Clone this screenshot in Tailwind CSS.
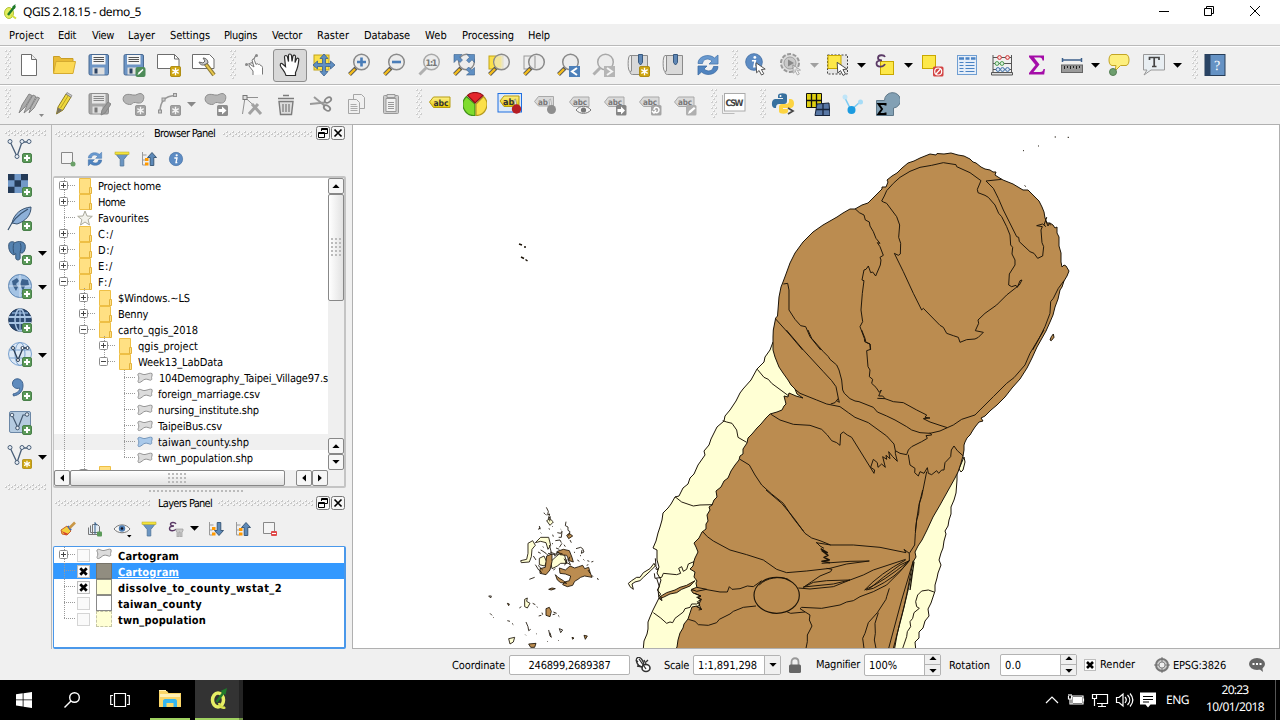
<!DOCTYPE html>
<html lang="en">
<head>
<meta charset="utf-8">
<title>QGIS 2.18.15 - demo_5</title>
<script src="https://cdn.jsdelivr.net/npm/@tailwindcss/browser@4"></script>
</head>
<body class="w-[1280px] h-[720px] overflow-hidden bg-[#f0f0f0] text-[11px] leading-4 text-black font-['DejaVu_Sans_Condensed','DejaVu_Sans',sans-serif] [font-stretch:condensed] [text-rendering:geometricPrecision] whitespace-nowrap">

<svg width="0" height="0" class="absolute">
<defs>
<linearGradient id="gLab" x1="0" y1="0" x2="0" y2="1"><stop offset="0" stop-color="#fdf08a"/><stop offset="1" stop-color="#e8c800"/></linearGradient>
<pattern id="dots" width="4" height="6" patternUnits="userSpaceOnUse"><rect x="0" y="0" width="2" height="2" fill="#cfcfcf"/><rect x="0" y="0" width="1" height="1" fill="#fff"/><rect x="2" y="3" width="2" height="2" fill="#cfcfcf"/><rect x="2" y="3" width="1" height="1" fill="#fff"/></pattern>
<pattern id="hdots" width="6" height="4" patternUnits="userSpaceOnUse"><rect x="0" y="2" width="2" height="2" fill="#c8c8c8"/><rect x="0" y="2" width="1" height="1" fill="#fff"/><rect x="3" y="0" width="2" height="2" fill="#c8c8c8"/><rect x="3" y="0" width="1" height="1" fill="#fff"/></pattern>
<pattern id="grip" width="4" height="4" patternUnits="userSpaceOnUse"><rect width="2" height="2" fill="#bbb"/></pattern>

<symbol id="handle" viewBox="0 0 6 30"><rect width="6" height="30" fill="url(#dots)"/></symbol>
<symbol id="down" viewBox="0 0 9 5"><path d="M0 0h9L4.500 4.800z" fill="currentColor"/></symbol>
<symbol id="plus" viewBox="0 0 10 10"><rect x=".5" y=".5" width="9" height="9" rx="1.500" fill="#5b9a59" stroke="#49804a"/><path d="M5 2v6M2 5h6" stroke="#fff" stroke-width="2"/></symbol>
<symbol id="sparkY" viewBox="0 0 12 12"><rect x=".5" y=".5" width="11" height="11" rx="1.500" fill="#cfa611" stroke="#a8850a"/><path d="M6 2v8M2.500 4l7 4M9.500 4l-7 4" stroke="#fff" stroke-width="1.500"/></symbol>
<symbol id="sparkG" viewBox="0 0 12 12"><rect x=".5" y=".5" width="11" height="11" rx="1.500" fill="#a2a2a2" stroke="#8f8f8f"/><path d="M6 2v8M2.500 4l7 4M9.500 4l-7 4" stroke="#f4f4f4" stroke-width="1.500"/></symbol>
<symbol id="file" viewBox="0 0 24 24"><path d="M4.500 1.500h10l5 5v16h-15z" fill="#fff" stroke="#6d6d6d"/><path d="M14.500 1.500v5h5" fill="#eee" stroke="#6d6d6d"/></symbol>
<symbol id="open" viewBox="0 0 24 24"><path d="M1.500 20V3.500h6l1.500 2h12V9" fill="#e9bb35" stroke="#c99e26"/><path d="M1.500 20.500L4 8.500h19.500l-2.500 12z" fill="#fcd956" stroke="#d5ab30"/></symbol>
<symbol id="save" viewBox="0 0 24 24"><rect x="2" y="1.500" width="19.500" height="20.500" rx="1.500" fill="#6d95c5" stroke="#4a6a92"/><rect x="5" y="2" width="13.500" height="9.500" fill="#f4f4f4"/><path d="M6.500 4.500h10.500M6.500 6.500h10.500M6.500 8.500h10.500" stroke="#555"/><rect x="5.500" y="14.500" width="12" height="7" fill="#dedede"/><rect x="7.500" y="15.500" width="3" height="5" fill="#2b4263"/></symbol>
<symbol id="saveG" viewBox="0 0 24 24"><rect x="2" y="1.500" width="19.500" height="20.500" rx="1.500" fill="#a6a6a6" stroke="#8e8e8e"/><rect x="5" y="2" width="13.500" height="9.500" fill="#e6e6e6"/><path d="M6.500 4.500h10.500M6.500 6.500h10.500M6.500 8.500h10.500" stroke="#888"/><rect x="5.500" y="14.500" width="10" height="7" fill="#dedede"/><rect x="7.500" y="15.500" width="3" height="5" fill="#777"/><path d="M14 23l1-5 6-8 3 2-6 9z" fill="#999" stroke="#858585"/></symbol>
<symbol id="hand" viewBox="0 0 24 24"><path d="M8 22.500c-.5-3-2.500-5-5-8.500-1.500-2.500-.5-4 1-3.500l3.500 3L6.500 4c0-2 2.500-2 3 0l1 4.500V2.500c0-2 2.500-2 3 0l.5 6 1-5.500c.5-1.500 2.500-1.200 2.500.5l-.5 6 1.500-3.500c1-1.500 2.500-.8 2.300.8-.5 5.200-.8 8.200-3.300 12.700v3z" fill="#fff" stroke="#2a2a2a" stroke-width="1.200"/></symbol>
<symbol id="lens" viewBox="0 0 24 24"><path d="M9 15L2.500 21.500" stroke="#555" stroke-width="4"/><path d="M8 16L2.500 21.500" stroke="#f5bd1c" stroke-width="2.400"/><circle cx="14.500" cy="9" r="7.800" fill="#eaeaea" fill-opacity=".82" stroke="#8a8a8a" stroke-width="1.500"/></symbol>
<symbol id="lensG" viewBox="0 0 24 24"><path d="M9 15L2.500 21.500" stroke="#b0b0b0" stroke-width="3"/><circle cx="14.500" cy="9" r="7.800" fill="#ececec" stroke="#a8a8a8" stroke-width="1.500"/></symbol>
<symbol id="book" viewBox="0 0 24 24"><path d="M4 2.500h5v16H4c-2.500 0-2.500-16 0-16z" fill="#eee" stroke="#8b8b8b"/><path d="M5.500 2.500h16v19h-15c-1.500 0-2.500-1-2.500-3l1.500-.5z" fill="#d9d9d9" stroke="#8b8b8b"/><path d="M12.500 1.500h4v8l-2 2.500-2-2.500z" fill="#5f87b5" stroke="#38597f"/></symbol>
<symbol id="refresh" viewBox="0 0 24 24"><path d="M2 10.500C2 3 13 0 18.500 5L22 2v9h-9l3-3C12 4.500 7 6 6.500 10.500z" fill="#6a9ad0" stroke="#4777ad" stroke-width=".8"/><path d="M22 13.500C22 21 11 24 5.500 19L2 22v-9h9l-3 3c4 3.500 9 2 9.500-2.500z" fill="#4f83bf" stroke="#3d6ca3" stroke-width=".8"/></symbol>
<symbol id="info" viewBox="0 0 24 24"><circle cx="12" cy="12" r="10" fill="#5d8cc4" stroke="#4470a5"/><circle cx="13" cy="6.500" r="1.700" fill="#fff"/><path d="M9.500 10.500h4l-1.500 7h2" stroke="#fff" stroke-width="2" fill="none"/></symbol>
<symbol id="cur" viewBox="0 0 12 14"><path d="M1 .8l.6 10 2.500-2.300L6.500 13l2.300-1.200-2.400-4.300 3.800-.4z" fill="#fff" stroke="#444" stroke-width=".9"/></symbol>
<symbol id="lab" viewBox="0 0 24 24"><path d="M1.500 12l4-5h16.500v10.500H5.500z" fill="url(#gLab)" stroke="#b79d10"/><text x="5.500" y="15.500" font-size="8.500" font-weight="bold" fill="#333" textLength="15">abc</text></symbol>
<symbol id="labG" viewBox="0 0 24 24"><path d="M1.500 10l4-5h15.500v9.500H5.500z" fill="#dadada" stroke="#a9a9a9"/><text x="5" y="13" font-size="8" font-weight="bold" fill="#777" textLength="14">abc</text></symbol>
<symbol id="blob" viewBox="0 0 24 24"><path d="M2.500 3.500C7 .5 11 4.500 15 2.500c4-2.500 8 0 6.500 5-1 4-4.500 4-8 3-3-.8-3 2.500-6 2C1.500 12-.5 7 2.500 3.500z" fill="#b5b5b5" stroke="#8d8d8d"/></symbol>
<symbol id="vec" viewBox="0 0 26 26"><path d="M3 3.500l7 15 5-14.500h7" fill="none" stroke="#4a5f78" stroke-width="1.300"/><g fill="#e8eef5" stroke="#4a5f78"><circle cx="3" cy="3.500" r="2"/><circle cx="10" cy="18.500" r="2"/><circle cx="15" cy="3.500" r="2"/><circle cx="22" cy="3.500" r="2"/></g></symbol>
<symbol id="funnel" viewBox="0 0 16 16"><path d="M1 2h14L9.800 8.500V15H6.200V8.500z" fill="#6b95c2" stroke="#4f7599" stroke-width=".8"/><rect x="1" y="1" width="14" height="2.500" fill="#f3e33c" stroke="#b9a820" stroke-width=".5"/></symbol>
<symbol id="treeUp" viewBox="0 0 16 16"><path d="M1.500 1v13h3M1.500 4h4M1.500 9h3" fill="none" stroke="#9a9a9a"/><rect x="4" y="7" width="3.500" height="3" fill="#f90"/><rect x="4" y="11.500" width="3.500" height="3" fill="#f90"/><path d="M11 1.500l4.500 5h-2.700v8H9.200v-8H6.500z" fill="#5d89b8" stroke="#33516f" stroke-width=".9"/></symbol>
<symbol id="treeDn" viewBox="0 0 16 16"><path d="M1.500 1v13h3M1.500 4h4M1.500 9h3" fill="none" stroke="#9a9a9a"/><rect x="4" y="6" width="3.500" height="3" fill="#f90"/><rect x="4" y="11.500" width="3.500" height="3" fill="#f90"/><path d="M11 14.500l4.500-5h-2.700v-8H9.200v8H6.500z" fill="#5d89b8" stroke="#33516f" stroke-width=".9"/></symbol>
<symbol id="fold" viewBox="0 0 14 16"><path d="M.5 .5h11v15H.5z" fill="#ffe083" stroke="#eebf45"/><path d="M10.500 9.500h2v6h-2z" fill="#ffe083" stroke="#e3b23c"/></symbol>
<symbol id="poly" viewBox="0 0 16 12"><path d="M1 2c2-2 4 1 7 .5S13 .5 15 1.500c.8 2-1 3.500-.3 5 .3 1.500-1 2-2.200 1.500-2-.7-4-1.500-6 0S3 11 1.500 10.500C.3 9.500 1.800 8 1.800 6S.5 3.500 1 2z" fill="#dcdcdc" stroke="#8a8a8a" stroke-width=".9"/></symbol>
<symbol id="polyB" viewBox="0 0 16 12"><path d="M1 2c2-2 4 1 7 .5S13 .5 15 1.500c.8 2-1 3.500-.3 5 .3 1.500-1 2-2.200 1.500-2-.7-4-1.500-6 0S3 11 1.500 10.500C.3 9.500 1.800 8 1.800 6S.5 3.500 1 2z" fill="#a9c9ea" stroke="#6c8fb5" stroke-width=".9"/></symbol>
<symbol id="ex" viewBox="0 0 9 9"><rect x=".5" y=".5" width="8" height="8" rx="1" fill="#fff" stroke="#8c8c8c"/><path d="M2 4.500h5M4.500 2v5" stroke="#444"/></symbol>
<symbol id="co" viewBox="0 0 9 9"><rect x=".5" y=".5" width="8" height="8" rx="1" fill="#fff" stroke="#8c8c8c"/><path d="M2 4.500h5" stroke="#444"/></symbol>
<symbol id="float" viewBox="0 0 14 14"><rect x=".5" y=".5" width="13" height="13" rx="2" fill="#f6f6f6" stroke="#777"/><path d="M5.500 5V2.500h6v5H9M5 3.500h7M2.500 6.500h6v5h-6zM2 7.500h7" fill="none" stroke="#000"/></symbol>
<symbol id="close" viewBox="0 0 14 14"><rect x=".5" y=".5" width="13" height="13" rx="2" fill="#f6f6f6" stroke="#777"/><path d="M3.500 3.500l7 7M10.500 3.500l-7 7" stroke="#000" stroke-width="1.700"/></symbol>
<symbol id="xm" viewBox="0 0 12 12"><rect x=".5" y=".5" width="11" height="11" fill="#fff" stroke="#bdbdbd"/><path d="M3 3l6 6M9 3l-6 6" stroke="#000" stroke-width="2.600"/></symbol>
<symbol id="elephant" viewBox="0 0 24 24"><path d="M2 5c0-4 5-4.500 7-2.500C12 .5 21 0 21 7c0 4-2 7-4 7.500l-2-1V20c0 3-5 3-5 0v-5l-2 1.500C3 15 1.500 9 2 5z" fill="#5582b0" stroke="#2e4d6e"/><path d="M8 3c-1.500 3-1 9 0 12M15 3c1.500 3 1 7 0 10" fill="none" stroke="#2e4d6e"/></symbol>
</defs>
</svg>

<!-- Title bar -->
<div class="h-6 bg-white flex items-center font-['Noto_Sans','Open_Sans',sans-serif] [font-stretch:normal] text-[12px]">
  <svg class="w-4 h-4 ml-[3px] mt-[-1px]" viewBox="0 0 16 16"><ellipse cx="6" cy="9" rx="4.500" ry="5.500" fill="#e3ee5c" stroke="#b2c23a"/><path d="M8 11l5 3.500" stroke="#d4df3f" stroke-width="2"/><path d="M5 11L12 2" stroke="#1f7a2b" stroke-width="2.400"/><path d="M12.500 0l-.5 5-3-2z" fill="#1f7a2b"/></svg>
  <span data-w="118" class="ml-1">QGIS 2.18.15 - demo_5</span>
  <svg class="ml-auto mr-[17px] w-[104px] h-3 -mt-0.5" viewBox="1159 0 104 12" fill="none" stroke="#000"><path d="M1159 6.500h10M1204.500 3.500h7v7h-7zM1206.500 3.500v-2h7v7h-2M1250 1l10 10M1260 1l-10 10"/></svg>
</div>

<!-- Menu -->
<nav class="h-[22px] border-b border-[#b9b9b9] flex items-center pl-[9px] pt-0.5">
  <div class="w-[49px]"><span data-w="35">Project</span></div><div class="w-[34px]"><span data-w="18">Edit</span></div><div class="w-9"><span data-w="22">View</span></div><div class="w-[42px]"><span data-w="27">Layer</span></div><div class="w-[54px]"><span data-w="40">Settings</span></div><div class="w-12"><span data-w="33">Plugins</span></div><div class="w-[45px]"><span data-w="30">Vector</span></div><div class="w-[47px]"><span data-w="32">Raster</span></div><div class="w-[61px]"><span data-w="46">Database</span></div><div class="w-[37px]"><span data-w="22">Web</span></div><div class="w-[66px]"><span data-w="52">Processing</span></div><div><span data-w="22">Help</span></div>
</nav>

<!-- Main toolbar -->
<div class="h-[39px] border-b border-[#b9b9b9] shadow-[inset_0_1px_0_#fff] flex items-center *:shrink-0">
  <div class="w-[11px] pl-[5px]"><svg class="w-1.5 h-[30px]"><use href="#handle"/></svg></div>
  <div class="flex [&>svg]:w-6 [&>svg]:h-6 [&>svg]:mx-[5.5px]">
    <svg><use href="#file"/></svg><svg><use href="#open"/></svg><svg><use href="#save"/></svg>
    <svg><use href="#save"/><rect x="13.500" y="14" width="10" height="10" rx="2" fill="#4d8b58"/><path d="M15.500 22l1-2.500 4-3.500 1 1-4 4z" fill="#fff"/></svg>
    <svg viewBox="0 0 24 24"><path d="M.5 1.500h17l4.500 4.500v9.500H.5z" fill="#fff" stroke="#6d6d6d"/><path d="M17.500 1.500v4.500h4.500" fill="none" stroke="#6d6d6d"/><use href="#sparkY" x="13" y="13" width="11" height="11"/></svg>
    <svg viewBox="0 0 24 24"><path d="M.5 1.500h17l4.500 4.500v9.500H.5z" fill="#fff" stroke="#6d6d6d"/><path d="M13 10l9 12" stroke="#8b7a3a" stroke-width="4"/><path d="M14 11.500l8 10.500" stroke="#e9c74b" stroke-width="2"/><path d="M7 9c1 3 4 4 7 2l2-1c0-3-2-5-5-5l2 3-2 2z" fill="#ccc" stroke="#666"/></svg>
  </div>
  <div class="w-[17px] pl-[9px]"><svg class="w-1.5 h-[30px]"><use href="#handle"/></svg></div>
  <div class="flex items-center [&>svg]:w-6 [&>svg]:h-6 [&>svg]:mx-[5.45px]">
    <svg viewBox="0 0 24 24"><path d="M9 11L13 2M13 2l-3 5M3 12l7-3" stroke="#888" fill="none"/><circle cx="13.500" cy="2.500" r="1.500" fill="#888"/><circle cx="3.500" cy="11.500" r="1.500" fill="#888"/><path d="M10 22v-4l-4-5c0-2 1-2 2-1l3 2-2-7c1-1.500 2-1 2.500.5l1.500 4c1-1 2-1 2.500 0 1-.5 2 0 2 1 1 0 2 1 2 2v7" fill="#fff" stroke="#777"/></svg>
    <div class="w-[34px] h-[33px] rounded-[3px] border border-[#8e8e8e] bg-[#d8d8d8] flex items-center justify-center"><svg class="w-6 h-6"><use href="#hand"/></svg></div>
    <svg viewBox="0 0 24 24"><rect x="2" y="2" width="15" height="15" fill="#fbe04a" stroke="#c2a416"/><path d="M12 1l4 4.500h-2.500v5h5V8l4.500 4-4.500 4v-2.500h-5v5H16l-4 4.500-4-4.500h2.500v-5h-5V16L1 12l4.500-4v2.500h5v-5H8z" fill="#5f8fc3" stroke="#3b5f8a" stroke-width=".8"/></svg>
    <svg viewBox="0 0 24 24"><use href="#lens"/><path d="M14.500 4.500v9M10 9h9" stroke="#4a7db8" stroke-width="2.600"/></svg>
    <svg viewBox="0 0 24 24"><use href="#lens"/><path d="M10 9h9" stroke="#4a7db8" stroke-width="2.600"/></svg>
    <svg viewBox="0 0 24 24"><use href="#lensG"/><text x="8.500" y="12.500" font-size="9" font-weight="bold" fill="#777" textLength="12">1:1</text></svg>
    <svg viewBox="0 0 24 24"><use href="#lens"/><g fill="#5f8fc3" stroke="#3b5f8a" stroke-width=".6"><path d="M2 1.500h8L7.500 4l3 3-2.500 2.500-3-3L2 9.500zM22.500 1.500v8L20 6.800l-3 3-2.500-2.500 3-3-2.500-2.800zM22.500 22h-8l2.700-2.500-3-3 2.500-2.500 3 3 2.800-2.500z"/></g></svg>
    <svg viewBox="0 0 24 24"><rect x="2" y="3" width="14" height="13" fill="#fbe04a" stroke="#c2a416"/><use href="#lens"/><path d="M9.500 3.500h5v11h-5a8 8 0 0 1 0-11z" fill="#f3e387" opacity=".7"/></svg>
    <svg viewBox="0 0 24 24"><rect x="2" y="3" width="11" height="13" fill="#eee" stroke="#999"/><use href="#lens"/><path d="M13 3v12" stroke="#999"/></svg>
    <svg viewBox="0 0 24 24"><use href="#lens"/><rect x="13" y="13" width="11" height="11" fill="#4d80ba"/><path d="M21 15l-5 3.500 5 3.500" fill="none" stroke="#fff" stroke-width="2"/></svg>
    <svg viewBox="0 0 24 24"><use href="#lensG"/><rect x="13" y="13" width="11" height="11" fill="#b5b5b5"/><path d="M16 15l5 3.500-5 3.500" fill="none" stroke="#f4f4f4" stroke-width="2"/></svg>
    <svg viewBox="0 0 24 24"><use href="#book"/><use href="#sparkY" x="13" y="13" width="11" height="11"/></svg>
    <svg><use href="#book"/></svg>
    <svg><use href="#refresh"/></svg>
  </div>
  <div class="w-[13.500px] pl-[7px]"><svg class="w-1.5 h-[30px]"><use href="#handle"/></svg></div>
  <div class="flex items-center [&>svg]:w-6 [&>svg]:h-6 [&>svg]:mx-[5.500px] [&>i]:w-3 [&>i]:pl-[1px] [&>i>svg]:w-[9px] [&>i>svg]:h-[5px]">
    <svg viewBox="0 0 24 24"><use href="#info" x="0" y="-1" width="20" height="20"/><use href="#cur" x="11" y="9" width="12" height="14"/></svg>
    <svg viewBox="0 0 24 24"><circle cx="11" cy="10" r="9" fill="#ddd" stroke="#999" stroke-width="2" stroke-dasharray="4 1.600"/><circle cx="11" cy="10" r="6" fill="#c9c9c9" stroke="#a0a0a0"/><path d="M9 6.500l6 3.500-6 3.500z" fill="#888"/><use href="#cur" x="13" y="11" width="10" height="12" opacity=".5"/></svg>
    <i class="text-[#a0a0a0]"><svg><use href="#down"/></svg></i>
    <svg viewBox="0 0 24 24"><rect x="1.500" y="2" width="20" height="19" fill="#e4e4e4" stroke="#444" stroke-dasharray="2 1.500"/><rect x="2" y="2.500" width="13" height="13" fill="#fde849" stroke="#c9a800"/><use href="#cur" x="9.500" y="8.500" width="14" height="15"/></svg>
    <i><svg><use href="#down"/></svg></i>
    <svg viewBox="0 0 24 24"><rect x="7.500" y="8.500" width="13" height="13" fill="#fde849" stroke="#c9a800"/><path d="M12 4c-1-2.500-7-2.500-7 1 0 2 2 2.300 4 2.300C6 7.300 3.500 8 3.500 10.500c0 4 7 4 8.500.5" fill="none" stroke="#5b3a66" stroke-width="1.800"/></svg>
    <i><svg><use href="#down"/></svg></i>
    <svg viewBox="0 0 24 24"><rect x="2.500" y="2.500" width="13" height="13" fill="#fde849" stroke="#c9a800"/><rect x="13" y="13.500" width="10.500" height="10" rx="1.500" fill="#d34343"/><circle cx="18.200" cy="18.500" r="3.500" fill="none" stroke="#fff" stroke-width="1.200"/><path d="M16 21l4.500-5" stroke="#fff" stroke-width="1.200"/></svg>
    <svg viewBox="0 0 24 24"><rect x="2.500" y="2.500" width="19" height="19" fill="#e6eef8" stroke="#6f9ed2"/><path d="M4 5.500h5M10.500 5.500h4M16 5.500h4.500" stroke="#4a83c4" stroke-width="2.500"/><path d="M4.500 9.500h4M10.500 9.500h9M4.500 12.500h4M10.500 12.500h9M4.500 15.500h4M10.500 15.500h9M4.500 18.500h4M10.500 18.500h9" stroke="#4a83c4"/></svg>
    <svg viewBox="0 0 24 24"><path d="M3 2v18M21.500 2v18M3 4.500h18M3 10.500h18M3 16.500h18" stroke="#555" fill="none"/><path d="M1.500 19.500h21v2.500h-21z" fill="#ddd" stroke="#555"/><g fill="#fbe0e0" stroke="#c33"><circle cx="9.500" cy="4.500" r="1.900"/><circle cx="17.500" cy="4.500" r="1.900"/></g><g fill="#dff2df" stroke="#4a9c50"><circle cx="7" cy="10.500" r="1.900"/><circle cx="12" cy="10.500" r="1.900"/></g><g fill="#dfe9f5" stroke="#3e6fa8"><circle cx="8" cy="16.500" r="1.900"/><circle cx="12.500" cy="16.500" r="1.900"/><circle cx="17.500" cy="16.500" r="1.900"/></g></svg>
    <svg viewBox="0 0 24 24"><path d="M4 2.500h15v5h-1.500c-.3-2-1-3-3-3H9l5.500 7L8.500 19H15c2.500 0 3-1 3.500-3H20l-.8 5.500H4V20l6.500-8L4 4z" fill="#a40da8"/></svg>
    <svg viewBox="0 0 24 24"><path d="M2.500 5v4M21.500 5v4M2.500 7h19" stroke="#3c5f8a" stroke-width="1.500"/><rect x="1.500" y="12" width="21" height="7.500" fill="#9a9a9a" stroke="#666"/><path d="M4.500 13v3M7.500 13v2M10.500 13v3M13.500 13v2M16.500 13v3M19.500 13v2" stroke="#222"/></svg>
    <i><svg><use href="#down"/></svg></i>
    <svg viewBox="0 0 24 24"><path d="M5 1.500h14c4 0 4 11 0 11h-5.500L8 18l1-5.500H5c-4 0-4-11 0-11z" fill="#fdef7e" stroke="#c3a524"/><circle cx="6" cy="19" r="3.500" fill="#6d9e6d" stroke="#557f55"/></svg>
    <svg viewBox="0 0 24 24"><path d="M1.500 1.500h21v15.500H9l-7 5 3-5H1.500z" fill="#e8eef2" stroke="#999"/><path d="M7.500 7V4.500h9.500V7M12.200 4.500v9M10 13.500h4.500" stroke="#444" stroke-width="1.700" fill="none"/></svg>
    <i><svg><use href="#down"/></svg></i>
  </div>
  <div class="w-[14px] pl-2"><svg class="w-1.5 h-[30px]"><use href="#handle"/></svg></div>
  <svg class="w-6 h-6 ml-[5.500px]" viewBox="0 0 24 24"><rect x="2" y="1.500" width="20" height="21" fill="#6592c4" stroke="#263c57"/><rect x="2" y="1.500" width="5.500" height="21" fill="#2a4464"/><text x="11" y="17" font-size="14" font-family="Liberation Serif" fill="#fff">?</text></svg>
</div>

<!-- Editing toolbar -->
<div class="h-[39px] shadow-[inset_0_1px_0_#fff] flex items-center pb-px *:shrink-0">
  <div class="w-[11px] pl-[5px]"><svg class="w-1.5 h-[30px]"><use href="#handle"/></svg></div>
  <div class="flex items-center [&>svg]:w-6 [&>svg]:h-6 [&>svg]:mx-[5.500px]">
    <svg class="overflow-visible" viewBox="0 0 24 24"><path d="M2 21l3-8L12 2l3 1.500L8 15z" fill="#aaa" stroke="#868686"/><path d="M7 21l3-8 6-10 3 1.500L13 16z" fill="#b0b0b0" stroke="#868686"/><path d="M12 21l2-6 6-10 2.500 1L17 16z" fill="#b5b5b5" stroke="#868686"/><path d="M22 22h5l-2.500 3z" fill="#888"/></svg>
    <svg viewBox="0 0 24 24"><path d="M4.500 22l1.500-7L14 2l5 3-8 13z" fill="#f0d93c" stroke="#8d7c22"/><path d="M8.500 16L16 4" stroke="#b9a226"/><path d="M14 2l1-1.500 5 3-1 1.800z" fill="#ccc" stroke="#777" stroke-width=".7"/><path d="M4.500 22l1.500-6.500 4.500 2.500z" fill="#7a7466"/></svg>
    <svg><use href="#saveG"/></svg>
    <svg viewBox="0 0 24 24"><use href="#blob"/><use href="#sparkG" x="13" y="13" width="11" height="11"/></svg>
    <svg viewBox="0 0 24 24"><path d="M3 20C3 9 8 4 18 3.500" fill="none" stroke="#999" stroke-width="1.500"/><g fill="#ccc" stroke="#909090"><rect x="1.500" y="18" width="3" height="3"/><rect x="5" y="6" width="3" height="3"/><rect x="16.500" y="1.500" width="3" height="3"/></g><use href="#sparkG" x="13" y="13" width="11" height="11"/></svg>
  </div>
  <div class="w-3 pl-[1px] text-[#888]"><svg class="w-[9px] h-[5px]"><use href="#down"/></svg></div>
  <div class="flex items-center [&>svg]:w-6 [&>svg]:h-6 [&>svg]:mx-[5.500px]">
    <svg viewBox="0 0 24 24"><use href="#blob"/><rect x="13" y="13" width="11" height="11" rx="1.500" fill="#8e8e8e"/><path d="M14.500 17h3.500v-2.500l4.500 4-4.500 4V20h-3.500z" fill="#fff"/></svg>
    <svg viewBox="0 0 24 24"><path d="M3.500 22L6 5.500h13M6 5.500l10 9" stroke="#909090" fill="none"/><rect x="4" y="3.500" width="4" height="4" fill="#ddd" stroke="#777"/><path d="M10 22l9-10M13 12l9 10" stroke="#a2a2a2" stroke-width="3"/></svg>
    <svg viewBox="0 0 24 24"><path d="M4 6.500h16M9 3.500h6M5 9.500h14l-1.500 13h-11z" fill="#ddd" stroke="#7c7c7c" stroke-width="1.400"/><path d="M9 12v8M12 12v8M15 12v8" stroke="#8c8c8c" stroke-width="1.500"/></svg>
    <svg viewBox="0 0 24 24"><path d="M1 12l15-1.500M5 5l11 9" stroke="#999" stroke-width="2"/><ellipse cx="19" cy="8" rx="3.500" ry="2.300" transform="rotate(-35 19 8)" fill="none" stroke="#888" stroke-width="1.800"/><ellipse cx="18" cy="16" rx="3.500" ry="2.300" transform="rotate(35 18 16)" fill="none" stroke="#888" stroke-width="1.800"/></svg>
    <svg viewBox="0 0 24 24"><g fill="#f0f0f0" stroke="#a5a5a5"><path d="M9.500 2.500h8l3 3v11h-11z"/><path d="M4.500 7.500h8l3 3v11h-11z"/></g><path d="M6.500 12.500h6M6.500 14.500h7M6.500 16.500h7M6.500 18.500h7" stroke="#aaa"/></svg>
    <svg viewBox="0 0 24 24"><rect x="4.500" y="3.500" width="15" height="18" rx="1" fill="#ccc" stroke="#999"/><path d="M7 6.500h10v13H7z" fill="#f2f2f2" stroke="#999"/><path d="M8 2.500h8v3H8z" fill="#ddd" stroke="#999"/><path d="M9 10.500h6M9 12.500h6M9 14.500h6M9 16.500h6" stroke="#999"/></svg>
  </div>
  <div class="w-[14px] pl-2"><svg class="w-1.5 h-[30px]"><use href="#handle"/></svg></div>
  <div class="flex items-center [&>svg]:w-6 [&>svg]:h-6 [&>svg]:mx-[5.500px]">
    <svg viewBox="0 2 24 24"><use href="#lab" width="24" height="24"/></svg>
    <svg viewBox="0 0 24 24"><g stroke-width="1.200"><path d="M12 12V23.500A11 11 0 0 1 3.500 4.500z" fill="#7fdc2e" stroke="#3f8f17"/><path d="M13 12V23.500A11 11 0 0 0 20.500 4.500z" fill="#fbe04a" stroke="#b59a1f"/><path d="M12.200 11L4.500 3.500C8-.5 16-.5 20 3.500z" fill="#e3262d" stroke="#8d1015"/></g></svg>
    <svg class="overflow-visible" viewBox="0 0 24 24"><rect x="0" y="1.500" width="23.500" height="18.500" fill="#dce9f8" stroke="#1f6fe0"/><path d="M2 9l4-5h15v10.500H6z" fill="url(#gLab)" stroke="#b79d10"/><text x="5" y="13" font-size="9" font-weight="bold" fill="#333">ab</text><path d="M16 8l1.500-1 2 10h-2z" fill="#eee" stroke="#777" stroke-width=".6"/><circle cx="18.500" cy="17" r="4.700" fill="#b51d24"/></svg>
    <svg viewBox="0 0 24 24"><path d="M1.500 9.500l4-5h15v9.500h-15z" fill="#dadada" stroke="#a9a9a9"/><text x="5" y="12.500" font-size="8" font-weight="bold" fill="#777">ab</text><path d="M16 8l1.500-1 2 10h-2z" fill="#eee" stroke="#999" stroke-width=".6"/><circle cx="18.500" cy="17.500" r="4.500" fill="#8e8e8e"/></svg>
    <svg viewBox="0 0 24 24"><use href="#labG"/><path d="M8 18c4-5 11-5 15 0-4 4.500-11 4.500-15 0z" fill="#f4f4f4" stroke="#777"/><circle cx="15.500" cy="18" r="2.600" fill="#777"/></svg>
    <svg viewBox="0 0 24 24"><use href="#labG"/><rect x="13" y="13" width="10.500" height="10.500" rx="1.500" fill="#858585"/><path d="M14.500 17h3.500v-2.500l4 4-4 4V20h-3.500z" fill="#fff"/></svg>
    <svg viewBox="0 0 24 24"><use href="#labG"/><rect x="13" y="13" width="10.500" height="10.500" rx="1.500" fill="#a5a5a5"/><path d="M16 18c0-4 5-3 5 0s-3 3-4 2M14 19l2 2 2-3" fill="none" stroke="#fff" stroke-width="1.500"/></svg>
    <svg viewBox="0 0 24 24"><use href="#labG"/><rect x="13" y="13" width="10.500" height="10.500" rx="1.500" fill="#b0b0b0"/><path d="M15 22l1-3 5-4 1.500 1.500-5 4.500z" fill="#fff"/></svg>
  </div>
  <div class="w-[14.500px] pl-[9px]"><svg class="w-1.5 h-[30px]"><use href="#handle"/></svg></div>
  <svg class="w-6 h-6 mx-[5.500px]" viewBox="0 2 24 24"><path d="M.5 5v18.500h12" fill="none" stroke="#bbb"/><rect x="2.500" y="3.500" width="20.500" height="17.500" fill="#fff" stroke="#aaa"/><text x="3.500" y="15.500" font-size="9" font-weight="bold" fill="#444" textLength="18">CSW</text></svg>
  <div class="w-[14px] pl-2"><svg class="w-1.5 h-[30px]"><use href="#handle"/></svg></div>
  <div class="flex items-center [&>svg]:w-6 [&>svg]:h-6 [&>svg]:mx-[5.500px]">
    <svg viewBox="0 0 24 24"><path d="M7 6V3.500C7 .5 16 .5 16 3.500V9c0 2-1 3-3 3H8c-2 0-3 1-3 4H3.500C0 16 0 7 4 7h8V6z" fill="#38719f"/><path d="M18 7h2c4 0 4 9 0 9h-8v1h5v2.500c0 3-9 3-9 0V15c0-2 1-3 3-3h4c2 0 3-1 3-3z" fill="#fcd443"/><circle cx="9.500" cy="4" r="1" fill="#fff"/><path d="M17 16l5 3-5 3" fill="none" stroke="#444" stroke-width="1.700"/></svg>
    <svg viewBox="0 0 24 24"><path d="M.5 1.500h15v14H.5z" fill="#dfcf12" stroke="#111"/><path d="M5.500 1.500v14M10.500 1.500v14M.5 8.500h15" stroke="#111" stroke-width="1.300"/><path d="M11 12l12-1 1 12.500H9z" fill="#5877a5" stroke="#16233a"/><path d="M17 11.500v12M10 17.500h14" stroke="#16233a" stroke-width="1.300"/></svg>
    <svg viewBox="0 0 24 24"><path d="M4 6l6 12 9-8" fill="none" stroke="#7ccbf2" stroke-width="1.600"/><circle cx="4" cy="5" r="2.500" fill="#bfe5f8"/><circle cx="19.500" cy="10" r="2.500" fill="#a6dcf7"/><circle cx="10.500" cy="18" r="4" fill="#1b9be0"/></svg>
    <svg viewBox="0 0 24 24"><path d="M.5 8.500h8a8 7.700 0 1 1 9 7.500v7.500H.5z" fill="#82a0b4" stroke="#5e7788"/><path d="M9.500 13.500V12h-7l3.500 5-3.500 5h7v-1.500" fill="none" stroke="#000" stroke-width="2"/></svg>
  </div>
</div>

<!-- Workspace -->
<div class="h-[525px] flex border-t border-[#b5b5b5]">
  <!-- Layer toolbar -->
  <aside class="w-[52px] border-r border-[#b9b9b9] pt-[5px] flex flex-col">
    <svg class="w-[42px] h-1.5 ml-[5px]"><rect width="42" height="6" fill="url(#hdots)"/></svg>
    <div class="-mt-0.5 [&>div]:h-[34px] [&>div]:flex [&>div]:items-center [&>div]:pl-[7px] [&>div]:gap-[5px] [&_.ic]:w-[26px] [&_.ic]:h-[26px] [&_.ar]:w-[9px] [&_.ar]:h-[5px]">
      <div><svg class="ic" viewBox="0 0 26 26"><use href="#vec"/><use href="#plus" x="15" y="15" width="10" height="10"/></svg></div>
      <div><svg class="ic" viewBox="0 0 26 26"><rect x="1" y="2" width="20" height="19" fill="#7299c8"/><path d="M1 2h6.500v6.300H1zM14 2h7v6.300h-7zM7.500 8.300H14v6.400H7.500zM1 14.700h6.500V21H1z" fill="#243a57"/><use href="#plus" x="15" y="15" width="10" height="10"/></svg></div>
      <div><svg class="ic" viewBox="0 0 26 26"><path d="M5 17C7 8 14 2 24 1c0 8-5 14-14 17z" fill="#8db0d8" stroke="#38526f"/><path d="M1 24C5 15 12 8 21 3" fill="none" stroke="#38526f" stroke-width="1.200"/><use href="#plus" x="15" y="15" width="10" height="10"/></svg></div>
      <div><svg class="ic" viewBox="0 0 26 26"><use href="#elephant" x="0" y="0" width="21" height="22"/><use href="#plus" x="15" y="15" width="10" height="10"/></svg><svg class="ar"><use href="#down"/></svg></div>
      <div><svg class="ic" viewBox="0 0 26 26"><circle cx="13" cy="12" r="11.500" fill="#a4c3e4" stroke="#5b83b0"/><path d="M5 7l5-3 2 3-3 3 2 3-2 4-3-5zM15 5l6 1 1 5-4 1-2 5-3-7zM14 19l4-1-1 3z" fill="#3d628d"/><path d="M1.500 12h23M13 .5v23" stroke="#dfe9f4" stroke-width=".8"/><use href="#plus" x="15" y="15" width="10" height="10"/></svg><svg class="ar"><use href="#down"/></svg></div>
      <div><svg class="ic" viewBox="0 0 26 26"><circle cx="13" cy="12" r="11.300" fill="#2c4a72" stroke="#223a5a"/><path d="M2 9h22M2 15h22" stroke="#a9c5e4" stroke-width="2"/><path d="M5 5h16" stroke="#7fa3cc" stroke-width="1.500"/><ellipse cx="13" cy="12" rx="5" ry="11" fill="none" stroke="#a9c5e4" stroke-width="1.500"/><path d="M13 1v22" stroke="#a9c5e4" stroke-width="1.200"/><use href="#plus" x="15" y="15" width="10" height="10"/></svg></div>
      <div><svg class="ic" viewBox="0 0 26 26"><circle cx="13" cy="12" r="11.500" fill="#dce8f5" stroke="#7ba2cf"/><ellipse cx="13" cy="12" rx="5" ry="11.500" fill="none" stroke="#7ba2cf"/><path d="M2 8h22M2 16h22" stroke="#7ba2cf"/><path d="M6 6l5 12 5-12h5" fill="none" stroke="#2c3e55" stroke-width="1.300"/><g fill="#fff" stroke="#2c3e55"><circle cx="6" cy="6" r="1.500"/><circle cx="11" cy="18" r="1.500"/><circle cx="15.500" cy="6" r="1.500"/><circle cx="20.500" cy="6" r="1.500"/></g><use href="#plus" x="15" y="15" width="10" height="10"/></svg><svg class="ar"><use href="#down"/></svg></div>
      <div><svg class="ic" viewBox="0 0 26 26"><path d="M6 18c5-1 7-4 6.500-6C9 13.500 5 11 5.500 7c.5-6 11-6 10.500 3-.3 6-4 9-9.500 10z" fill="#5f8bbd" stroke="#40648f"/><use href="#plus" x="15" y="15" width="10" height="10"/></svg></div>
      <div><svg class="ic" viewBox="0 0 26 26"><rect x="2.500" y="1.500" width="21" height="21" rx="1.500" fill="#b5cbe0" stroke="#6b87a6"/><path d="M5 5l6 13L16 5h5" fill="none" stroke="#44586f" stroke-width="1.200"/><g fill="#e8eef5" stroke="#44586f"><circle cx="5" cy="5" r="1.800"/><circle cx="10.500" cy="18" r="1.800"/><circle cx="20" cy="4.500" r="1.800"/></g><use href="#plus" x="15" y="15" width="10" height="10"/></svg></div>
      <div><svg class="ic" viewBox="0 0 26 26"><use href="#vec"/><use href="#sparkY" x="15" y="15" width="10" height="10"/></svg><svg class="ar"><use href="#down"/></svg></div>
    </div>
    <svg class="w-[42px] h-1.5 ml-[5px] mt-2.5"><rect width="42" height="6" fill="url(#hdots)"/></svg>
  </aside>

  <!-- Panels -->
  <section class="w-[294px] flex flex-col *:shrink-0 [&_span]:pt-0.5">
    <div class="h-[18px] flex items-center pl-[3px]">
      <svg class="w-[90px] h-1.5"><rect width="90" height="6" fill="url(#hdots)"/></svg>
      <span data-w="61" class="ml-[9px] -mt-0.5">Browser Panel</span>
      <svg class="w-[90px] h-1.5 ml-[8px]"><rect width="90" height="6" fill="url(#hdots)"/></svg>
      <svg class="w-3.5 h-3.5 ml-[3px] -mt-0.5"><use href="#float"/></svg><svg class="w-3.5 h-3.5 ml-[1px] -mt-0.5"><use href="#close"/></svg>
    </div>
    <div class="h-[33px] flex items-center pl-[8px] pb-0.5 gap-[11px] *:w-4 *:h-4">
      <svg viewBox="0 0 16 16"><path d="M1.500 1.500h11v11h-11z" fill="#f4f4f4" stroke="#888"/><circle cx="13" cy="13" r="2.500" fill="#6aa068"/></svg>
      <svg><use href="#refresh"/></svg><svg><use href="#funnel"/></svg><svg><use href="#treeUp"/></svg><svg><use href="#info"/></svg>
    </div>
    <div class="ml-px h-[312px] w-[293px] border-2 border-l border-[#c4c4c4] rounded-[2px] bg-white flex flex-col">
      <div class="flex h-[292px]">
        <div class="relative w-[274px] h-[292px] overflow-hidden [&>div]:h-4 [&>div]:flex [&>div]:items-center [&>div>*]:shrink-0 [&_.f]:w-3.5 [&_.f]:h-4 [&_.f]:mr-[5px] [&_.p]:w-4 [&_.p]:h-3 [&_.p]:mr-[5px] [&_.p]:-mt-px [&_.e]:w-[9px] [&_.e]:h-[9px] [&_.e]:mr-[11px] [&_.e]:z-10 [&_.e]:-mt-0.5">
          <svg class="absolute left-0 top-0 w-[274px] h-[292px]" viewBox="54 178 274 292" fill="none" stroke="#999" stroke-dasharray="1 1" shape-rendering="crispEdges"><path d="M64.500 178V470M84.500 288V470M104.500 336V362M124.500 370V457M64 185.500h11M64 201.500h11M64 217.500h11M64 233.500h11M64 249.500h11M64 265.500h11M64 281.500h11M84 297.500h11M84 313.500h11M84 329.500h11M104 345.500h11M104 361.500h11M124 377.500h11M124 393.500h11M124 409.500h11M124 425.500h11M124 441.500h11M124 457.500h11"/></svg>
          <div class="pl-[5px]"><svg class="e"><use href="#ex"/></svg><svg class="f"><use href="#fold"/></svg><span data-w="63">Project home</span></div>
          <div class="pl-[5px]"><svg class="e"><use href="#ex"/></svg><svg class="f"><use href="#fold"/></svg><span data-w="27">Home</span></div>
          <div class="pl-[23px]"><svg class="w-4 h-4 mr-[5px] z-10 -mt-px" viewBox="0 0 16 16"><path d="M8 1l2 5 5.300.3-4.200 3.400L12.500 15 8 12l-4.500 3 1.400-5.300L.7 6.300 6 6z" fill="#f2f2ec" stroke="#aaa99c"/></svg><span data-w="51">Favourites</span></div>
          <div class="pl-[5px]"><svg class="e"><use href="#ex"/></svg><svg class="f"><use href="#fold"/></svg><span data-w="16">C:/</span></div>
          <div class="pl-[5px]"><svg class="e"><use href="#ex"/></svg><svg class="f"><use href="#fold"/></svg><span data-w="16">D:/</span></div>
          <div class="pl-[5px]"><svg class="e"><use href="#ex"/></svg><svg class="f"><use href="#fold"/></svg><span data-w="15">E:/</span></div>
          <div class="pl-[5px]"><svg class="e"><use href="#co"/></svg><svg class="f"><use href="#fold"/></svg><span data-w="15">F:/</span></div>
          <div class="pl-[25px]"><svg class="e"><use href="#ex"/></svg><svg class="f"><use href="#fold"/></svg><span data-w="72">$Windows.~LS</span></div>
          <div class="pl-[25px]"><svg class="e"><use href="#ex"/></svg><svg class="f"><use href="#fold"/></svg><span data-w="30">Benny</span></div>
          <div class="pl-[25px]"><svg class="e"><use href="#co"/></svg><svg class="f"><use href="#fold"/></svg><span data-w="80">carto_qgis_2018</span></div>
          <div class="pl-[45px]"><svg class="e"><use href="#ex"/></svg><svg class="f"><use href="#fold"/></svg><span data-w="60">qgis_project</span></div>
          <div class="pl-[45px]"><svg class="e"><use href="#co"/></svg><svg class="f"><use href="#fold"/></svg><span data-w="85">Week13_LabData</span></div>
          <div class="pl-[83px]"><svg class="p"><use href="#poly"/></svg><span data-w="181" class="ml-px">104Demography_Taipei_Village97.shp</span></div>
          <div class="pl-[83px]"><svg class="p"><use href="#poly"/></svg><span data-w="102">foreign_marriage.csv</span></div>
          <div class="pl-[83px]"><svg class="p"><use href="#poly"/></svg><span data-w="101">nursing_institute.shp</span></div>
          <div class="pl-[83px]"><svg class="p"><use href="#poly"/></svg><span data-w="64">TaipeiBus.csv</span></div>
          <div class="pl-[83px] bg-[#f0f0f0]"><svg class="p"><use href="#polyB"/></svg><span data-w="91">taiwan_county.shp</span></div>
          <div class="pl-[83px]"><svg class="p"><use href="#poly"/></svg><span data-w="95">twn_population.shp</span></div>
          <div class="pl-[25px]"><svg class="e"><use href="#ex"/></svg><svg class="f"><use href="#fold"/></svg></div>
        </div>
        <div class="w-4 bg-[#efefef] flex flex-col">
          <div class="h-4 border border-[#888] rounded-[2px] bg-[#f6f6f6] flex items-center justify-center"><svg class="w-2 h-1 rotate-180"><use href="#down"/></svg></div>
          <div class="h-[107px] border border-[#888] rounded-[2px] bg-linear-to-r from-white to-[#e2e2e2] flex items-center justify-center"><svg class="w-2.5 h-[19px]"><rect width="10" height="19" fill="url(#grip)"/></svg></div>
          <div class="mt-auto h-4 border border-[#888] rounded-[2px] bg-[#f6f6f6] flex items-center justify-center"><svg class="w-2 h-1 rotate-180"><use href="#down"/></svg></div>
          <div class="h-4 border border-[#888] rounded-[2px] bg-[#f6f6f6] flex items-center justify-center"><svg class="w-2 h-1"><use href="#down"/></svg></div>
        </div>
      </div>
      <div class="h-4 flex bg-[#f0f0f0]">
        <div class="w-4 h-4 border border-[#888] rounded-[2px] bg-[#f6f6f6] flex items-center justify-center"><svg class="w-2 h-1 rotate-90"><use href="#down"/></svg></div>
        <div class="w-[215px] h-4 border border-[#888] rounded-[2px] bg-linear-to-b from-white to-[#e2e2e2] flex items-center justify-center"><svg class="w-[19px] h-2.5"><rect width="19" height="10" fill="url(#grip)"/></svg></div>
        <div class="w-4 h-4 ml-[11px] border border-[#888] rounded-[2px] bg-[#f6f6f6] flex items-center justify-center"><svg class="w-2 h-1 rotate-90"><use href="#down"/></svg></div>
        <div class="w-4 h-4 border border-[#888] rounded-[2px] bg-[#f6f6f6] flex items-center justify-center"><svg class="w-2 h-1 -rotate-90"><use href="#down"/></svg></div>
      </div>
    </div>
    <svg class="w-[94px] h-1 ml-[97px] mt-[2px]"><rect width="94" height="2" fill="url(#grip)"/></svg>
    <div class="h-[18px] flex items-center pl-[3px]">
      <svg class="w-[95px] h-1.5"><rect width="95" height="6" fill="url(#hdots)"/></svg>
      <span data-w="54" class="ml-[8px]">Layers Panel</span>
      <svg class="w-[95px] h-1.5 ml-[6px]"><rect width="95" height="6" fill="url(#hdots)"/></svg>
      <svg class="w-3.5 h-3.5 ml-[3px]"><use href="#float"/></svg><svg class="w-3.5 h-3.5 ml-[1px]"><use href="#close"/></svg>
    </div>
    <div class="h-[33px] flex items-center pl-[8px] gap-[11px] [&>svg]:w-4 [&>svg]:h-4">
      <svg viewBox="0 0 16 16"><path d="M1 9l6-4 4 5-4 4-5-1z" fill="#f3cf3c" stroke="#c9622a"/><path d="M1.500 10l4 4 3-1z" fill="#d63b2f"/><path d="M8 5l3 4" stroke="#3b67b5" stroke-width="2"/><path d="M9.500 7L15 1.500" stroke="#c99746" stroke-width="2.600"/></svg>
      <svg viewBox="0 0 16 16"><path d="M1.500 6.500v7h8M3.500 4.500v7h8M5.500 3.500h5l2 2v8h-7z" fill="#e4edf5" stroke="#777"/><path d="M8 13V1.500l2 3" stroke="#33608f" fill="none"/><rect x="10" y="10.500" width="5" height="5" rx="1" fill="#5b9a59"/></svg>
      <svg class="overflow-visible" viewBox="0 0 16 16"><path d="M0 8c4-5.500 12-5.500 16 0-4 5-12 5-16 0z" fill="#f6f6f6" stroke="#777"/><circle cx="8" cy="7.500" r="3.200" fill="#4e7fb4"/><circle cx="8" cy="7.500" r="1.300" fill="#112"/><path d="M13 14h4.500l-2.200 2.500z" fill="#000"/></svg>
      <svg><use href="#funnel"/></svg>
      <svg viewBox="0 0 16 16"><path d="M8 3C7 1 2.500 1 2.500 3.300 2.500 5 4 5 6 5 4 5 1.500 5.300 1.500 7.500c0 3 5 3 6.500.5" fill="none" stroke="#5b3a66" stroke-width="1.400"/><path d="M8 8h7v2l-1 1v5h-2v-5h-1v5H9v-5l-1-1z" fill="#c9c9c9" stroke="#9a9a9a" stroke-width=".7"/></svg>
      <svg class="!w-[9px] !h-[5px] -ml-[5px] -mr-[2px]"><use href="#down"/></svg>
      <svg><use href="#treeDn"/></svg><svg><use href="#treeUp"/></svg>
      <svg viewBox="0 0 16 16"><path d="M1.500 1.500h11v11h-11z" fill="#f4f4f4" stroke="#888"/><rect x="9" y="10" width="6" height="5" rx="1" fill="#df4b4b"/><path d="M10 12.500h4" stroke="#fff"/></svg>
    </div>
    <div class="relative ml-px mt-px h-[103px] border-x-2 border-l border-b-2 border-t border-[#4a98ea] rounded-[2px] bg-white font-bold [&>div]:h-4 [&>div]:flex [&>div]:items-center [&_span]:pt-[3px] [&_.c]:w-[13px] [&_.c]:h-[13px] [&_.c]:mr-1.5 [&_.c]:border [&_.c]:border-[#d5d5d5] [&_.c]:bg-[#fafafa] [&_.x]:w-[13px] [&_.x]:h-[13px] [&_.x]:mr-1.5 [&_.s]:w-4 [&_.s]:h-4 [&_.s]:mr-1.5 [&_.s]:border">
      <svg class="absolute left-0 top-0 w-[24px] h-[80px] z-10" viewBox="54 547 24 80" fill="none" stroke="#999" stroke-dasharray="1 1" shape-rendering="crispEdges"><path d="M64.500 547V619M64 554.500h11M64 570.500h11M64 586.500h11M64 602.500h11M64 618.500h11"/></svg>
      <div class="pl-[5px]"><svg class="w-[9px] h-[9px] mr-[9px] z-20 -mt-0.5"><use href="#ex"/></svg><i class="c"></i><svg class="w-4 h-3 mr-1.5 -mt-0.5"><use href="#poly"/></svg><span data-w="61">Cartogram</span></div>
      <div class="pl-[23px] bg-[#3399ff] text-white"><svg class="x"><use href="#xm"/></svg><i class="s bg-[#918d80] border-[#77746a]"></i><span data-w="61" class="underline">Cartogram</span></div>
      <div class="pl-[23px]"><svg class="x"><use href="#xm"/></svg><i class="s bg-[#ffffd4] border-[#8f8f80]"></i><span data-w="164">dissolve_to_county_wstat_2</span></div>
      <div class="pl-[23px]"><i class="c"></i><i class="s bg-white border-[#888]"></i><span data-w="84">taiwan_county</span></div>
      <div class="pl-[23px]"><i class="c"></i><i class="s bg-[#ffffd4] border-dashed border-[#c5c5a5]"></i><span data-w="88">twn_population</span></div>
    </div>
  </section>

  <!-- Map canvas -->
  <div class="ml-[6px] -mt-px w-[928px] h-[525px] border border-[#b0b0b0] bg-white">
    <svg class="block w-[926px] h-[523px]" viewBox="353 125 926 523" stroke="#1c1408" stroke-width="1" stroke-linejoin="round" fill="none">
      <g fill="#ffffd4">
        <path d="M773 342L770 350 765 357 764 362 757 369 751 380 743 389 740 393 736 401 730 410 725 416 724 421 717 427 711 439 709 445 704 451 705 455 698 465 694 474 690 478 688 484 683 488 679 496 675 497 671 504 668 508 663 513 662 520 660 527 658 533 656 541 653 548 657 550 657 560 659 567 657 573 661 580 658 590 659 598 656 604 653 610 650 617 648 622 648 629 647 634 644 641 643 652H700L720 600 730 500 775 440 815 405 785 350z"/>
        <path d="M964 457L965 462 963 470 961 472 959 469zM957 472V480L956 493 954 500 951 507 951 514 949 520 948 526 945 531 946 534 944 541 943 548 941 553 939 560 941 565 938 573 937 578 935 585 935 591 931 603 928 609 929 616 925 621 923 628 919 632 919 638 915 642 916 652H890L905 590 920 530z"/>
      </g>
      <path fill="#bb8c50" d="M773 337L773.300 330 775.700 318 777.500 316 779 297 781 287 783 282 786 274 790 263 795 253 803 242 808 237 813 232 823 225 830 221 837 217 843 213 850 209 855 209 862 205 868 203 873 198 878 193 882 189 882 187 886 187 888 182 887 180 892 176 897 173 902 168 908 163 914 161 920 158 925 156 930 154 936 155 937 153.500 944 154 951 153 958 155 964 156 970 159 973 162 976 163 981 167 985 169 990 170 993 172 996 172 995 175 998 177 1003 180 1013 184 1018 187 1023 190 1028 190 1032 194 1035 197 1039 201 1042 207 1044 212 1045 218 1047 223 1050 223 1053 225 1055 228 1057 227 1057 233 1059 237 1059 246 1061 253 1061 262 1062 267 1064 265 1066 266 1069 271 1067 276 1064 281 1062 287 1060 290 1058 299 1055 307 1053 315 1050 322 1046 331 1037 347 1032 358 1027 368 1020 379 1012 388 1005 397 997 405 991 410 985 416 981 418 983 421 979 422 975 427 973 430 970 435 967 438 965 442 964 445 964 450 963 456 961 463 958 472 955 478 950 487 945 496 940 505 933 517 927 530 922 540 918 546 915 552 916 557 913 562 910 577 907 593 904 607 900 622 897 635 894 652H674L677 647 678 640 680 633 683 628 684 624 688 619 690 613 692 607 697 606 701 609 699 604 701 600 698 598 701 596 693 593 691 590 697 588 696 583 697 581 694 577 695 572 690 569 693 566 694 561 695 558 698 552 696 547 694 543 699 538 702 532 706 529 706 524 708 521 707 515 710 510 709 507 712 505 714 500 717 497 716 491 721 487 724 481 728 478 731 471 735 465 739 460 740 456 743 454 743 449 747 443 748 438 752 434 757 428 761 424 766 418 770 414 777 412 782 410 784 406 786 404 785 400 784 396 788 397 789 393 796 396 803 398 797 394 795 389 791 385 788 380 783 373 779 367 775 357 773 350z"/>

      <!-- county borders, northern half -->
      <g transform="translate(740 130) scale(.33333)" stroke-width="2.900">
        <path d="M425 213L433 198 440 182 460 160 480 142 510 124 540 112 575 106 610 98 648 104 650 110 690 128 723 152 712 178 714 188 735 196 745 202 765 225 776 250 785 260 800 290 810 315 812 345 818 352 816 372 825 390 825 405 808 432 806 465 815 470 828 466 832 472 840 452 846 450 838 465 800 495 770 525 735 550 714 570 716 580 706 602 730 607 715 622 705 627 680 629 660 637 655 622 640 617 620 610 610 592 600 586 550 535 545 540 520 490 490 425 463 370 475 376 481 372 482 340 476 322 479 285 470 260 440 220 430 216z"/>
        <path d="M345 236L358 248 372 255 376 270 388 276 390 288 400 305 408 325 420 340 412 338 420 350 430 376 420 382 423 390 421 405 407 438 398 426 392 428 385 408 378 418 372 420 366 450 372 452 367 490 363 540 368 575 360 590 373 625 374 635 390 642 391 660"/>
        <path d="M785 148L738 153 760 175 775 205 790 240 830 320 836 322 838 335 870 365 882 370 893 385 908 378 911 350 906 338 903 300 907 290 890 287 908 282 918 290M912 285L920 262 916 270 924 288 928 280 932 286M130 462L143 460 147 480 147 540 165 568 182 587 197 590 210 620 242 660M107 567L150 615 188 660M972 452L955 475 940 505 932 515 930 550 915 590 895 630 878 660M944 21h4M983 22h4M894 48h3M849 62h3M854 166l3 4"/>
        <path d="M930 630L934 620 940 612 942 622 934 632z" fill="#bb8c50"/>
      </g>
      <g transform="translate(740 330) scale(.33333)" stroke-width="2.900">
        <path d="M204 0L215 25 250 65 265 80 270 88 290 105 297 120 305 150 308 180 313 190 330 206 345 213 357 215 400 232 412 246 440 258 465 270 500 290 515 300 540 308 570 310 600 303 622 293 640 285 665 268 705 255 760 200 800 160 822 143 855 105 870 70 912 0"/>
        <path d="M139 0L190 60 250 125 275 152 288 170 295 205 285 218 272 222M295 205L298 217 290 212M165 178L180 190 230 210 260 222 300 230 325 248 345 262 385 278 440 318 462 342 466 362 480 370 500 374 505 360 515 350 545 335 562 325 558 317 575 315 570 308"/>
        <path d="M365 0L375 25 378 37 390 42 392 58 380 62 384 110 390 120 388 140 398 148 395 160 408 172 418 187 424 180 416 198 428 198 435 206 412 205M435 206L460 215 490 218 530 240 560 255 555 262 570 264 550 266 570 276 600 286 622 293"/>
        <path d="M93 253L120 270 160 283 210 286 245 298 262 315 275 332 290 338 300 346 302 312 310 306 322 315 335 322 402 430 404 420 392 412 400 388 412 398 414 412 425 402 436 412 428 380 440 388 438 376 450 386 446 365 458 380 472 394 466 370 466 362M505 374L510 405 525 415 524 428 535 438 540 425 552 430 562 413 565 430 575 434 590 422 596 430 605 420 612 420 615 398 632 380 634 360 642 348 652 362 670 378"/>
        <path d="M560 425L545 500 538 520 536 550 530 570 526 603M0 388L28 405 45 435 65 465 95 492 130 520 160 565 190 603M52 118L72 142 85 148 95 160 145 197M-52 272L-40 276 -24 280 -10 300 -6 322 20 337"/>
      </g>
      <!-- county borders, southern half -->
      <g transform="translate(620 490) scale(.33333)" stroke-width="2.900">
        <path d="M438 0L485 40 520 82 555 130 575 144 600 152 632 165 700 165 780 172 858 188 852 178 868 190 884 165 886 130 890 90 896 50 908 0M868 190L868 212"/>
        <path d="M248 125L262 140 280 153 330 180 380 194 430 210 470 238 500 248 560 243 630 235 680 222 748 213 690 214 605 220M588 158L632 165M590 158L600 168 612 175"/>
        <path d="M602 176L622 188 606 182 624 196 612 202 628 210 606 214 630 218" stroke-width="4.500"/>
        <path d="M620 235L636 238 632 245 600 258 575 275 550 292 580 277 620 272 690 270 640 282 550 291M535 294L570 297 640 290 690 270 730 255 760 240 857 208M857 210Q780 250 734 300Q790 275 868 212Q830 262 760 295L738 300M868 212L840 225 790 262 748 296"/>
        <path d="M868 212L840 245 800 285 760 305 720 320 700 332 680 336 660 345 605 355 545 352 540 356 570 375 568 390 576 408 570 420 562 435 562 455 558 475M808 295L800 320 798 328 772 368 745 398 735 430 728 445 732 475M775 368L765 400 766 430 763 450 768 475M880 212L845 330 806 475M878 240L862 310 845 380 820 475"/>
        <path d="M882 215L870 300" stroke-width="4"/>
        <path d="M165 20L185 36 220 48 240 45 278 44M215 300L255 298 300 306 322 306 328 290 336 298 360 296 382 288 400 290 425 272M205 388L225 394 235 404 265 406 290 398 298 388 330 372 340 364 370 352 408 348M498 364L512 370 555 366M100 368L122 384 140 400 150 396 158 398 165 385 190 366 195 356 210 352 215 342 230 342 240 335M225 310L242 318 230 322 245 328 232 335 240 345 230 350 246 358 236 360M103 250L105 265 125 262 130 250 170 254 182 250 176 235 185 230 190 244 200 238 205 222 222 215M110 265L118 290 112 300 122 312 116 320"/>
        <ellipse cx="470" cy="316" rx="68" ry="54" stroke-width="3.500"/><path d="M418 285C440 262 480 258 505 268"/>
        <path d="M120 320L140 308 165 300 180 292 200 286 225 272 210 288 185 298 170 308 150 312 130 322 118 326zM215 298L230 292 260 298 230 304z" fill="#bb8c50"/>
        <path d="M25 280L35 272 50 262 60 262 70 248 90 236 102 220 106 228 92 242 70 262 60 272 45 276 36 282 40 298 30 290z" fill="#ffffd4"/>
        <path d="M106 205L108 230 114 240 106 236M122 318l4 14-8-6M942 306L925 300 905 303 893 315 887 335 890 350 898 355 882 368 878 385 870 395 872 410 862 425 860 440 848 475"/>
      </g>
      <!-- offshore islands -->
      <g transform="translate(470 490) scale(.33333)" stroke-width="2.600">
        <path d="M152 212L170 208 174 190 174 160 188 152 196 166 186 178 184 200 178 216 154 218zM196 158L212 142 236 142 242 166 234 178 228 158 212 154zM208 205L222 198 230 215 224 228 208 224zM242 215L258 200 270 190 284 196 290 220 272 220 262 228 246 236zM230 92L240 86 250 96 240 106zM164 328L172 324 170 334 180 340 172 354 164 350zM116 446L134 442 130 456 120 462z" fill="#ffffd4"/>
        <path d="M268 234L286 240 300 228 314 234 326 230 338 226 344 236 356 232 360 246 366 262 344 258 332 262 324 268 314 274 308 286 292 290 278 284 284 276 298 272 302 258 286 252 270 250zM262 184L280 178 298 182 306 202 310 216 298 212 290 196 270 194zM230 198L246 192 246 215 240 240 228 254 210 250 210 236 226 232zM290 136L298 130 308 138 296 146zM228 356L238 352 244 364 240 380 228 376zM176 462L198 460 194 472 182 472zM236 298L246 294 256 296 244 300zM306 442L312 444 308 448zM342 436L352 438 346 448zM112 340L118 342 116 347zM256 254L264 262 280 272 290 280 272 278 262 270z" fill="#bb8c50"/>
        <path d="M229 52l6 12-2 10 6-2-4 14 6-6-2 14M288 95l-2 12 8 4 0 10 6 4-4 12M222 68l2 4M208 108l2 10M204 118l8-4M236 116l4 2M262 128l10 2 4-6-2 18-8 0M256 152l14-2 4 8M248 134l2 6M300 150l4 8M282 164l4 6M318 176l14-4 6 4 4 10-8 4 2-10M204 186l8 4M190 198l8 12M212 180l4 2 12 8 6 6M352 212l6 2M364 216l6-2M322 210l6 4M340 208l3 3M350 226l5-2M366 256l3 4M382 264l3 6M196 224l10 16 10 8M178 268l16-6M238 165l6 22M234 190l22 4M276 160l-8 12M258 186l20 6M284 226l8-20M292 218l8 6M300 200l-6 14M250 240l6-4M56 318l8 0-2 6zM60 370l6 6M70 382l2 2M112 392l8 2M126 400l4 4M148 354l6-4M188 340l8 4M200 350l3 2M206 378l8-2M216 368l2 6M250 366l10 4M248 374l8-2M264 376l4 4M168 396l6 14 2 12 6-4M166 434l2 2M198 430l2 2M236 420l4 18 4 4-4-14M232 454l2 2M264 450l2 2M268 416l10 4-6 8zM252 198l12-6M258 174l10 4M354 240l6 10M240 186l16 6 8-4M204 226l14 14M282 206l10 16M296 212l6 14M226 72l4 4M212 128l2 2M246 108l2 2M272 118l2 2M312 186l3 2M330 196l3 2M246 160l3 2M218 170l3 2"/>
      </g>
      <path d="M519 244l3 1M524 247h2M521 257l3 1.500M525.500 259.500l2 1.500" stroke-width="1.500"/>
    </svg>
  </div>
</div>

<!-- Status bar -->
<footer class="h-[31px] flex items-center pl-[452px] *:shrink-0 [&_span]:pt-[3px]">
  <span data-w="53">Coordinate</span>
  <div class="ml-[4px] w-[121px] h-5 border border-[#b3b3b3] rounded-[2px] bg-white flex items-center justify-center"><span data-w="82">246899,2689387</span></div>
  <svg class="w-4 h-4 ml-[5px]" viewBox="0 0 16 16"><ellipse cx="5" cy="5" rx="3" ry="5" transform="rotate(-30 5 5)" fill="#fff" stroke="#333" stroke-width="1.500"/><ellipse cx="11" cy="11" rx="4" ry="3.500" fill="#fff" stroke="#333" stroke-width="1.600"/><path d="M4 2l7 10M2 9l6 1M9 3l2 4M13 3l-2 2M1 3l2 2" stroke="#333" stroke-width="1.300"/></svg>
  <span data-w="25" class="ml-[13px]">Scale</span>
  <div class="ml-1 w-[88px] h-5 border border-[#b3b3b3] rounded-[2px] bg-white flex items-center"><span data-w="59" class="ml-[4px]">1:1,891,298</span><div class="ml-auto w-4 h-full border-l border-[#b3b3b3] bg-[#f0f0f0] flex items-center justify-center"><svg class="w-2 h-1"><use href="#down"/></svg></div></div>
  <svg class="w-3 h-4 ml-[8px]" viewBox="0 0 12 16"><path d="M2.500 8V5c0-5 7-5 7 0v3" fill="none" stroke="#999" stroke-width="1.800"/><rect y="7.500" width="12" height="8.500" rx="1.500" fill="#666"/></svg>
  <span data-w="44" class="ml-[15px] -mt-0.5">Magnifier</span>
  <div class="ml-1 w-[77px] h-[22px] border border-[#b3b3b3] rounded-[2px] bg-white flex items-center"><span data-w="28" class="ml-1">100%</span><div class="ml-auto w-4 h-full border-l border-[#b3b3b3] bg-[#f0f0f0] flex flex-col items-center justify-around"><svg class="w-2 h-1 rotate-180"><use href="#down"/></svg><div class="w-full h-px bg-[#b3b3b3]"></div><svg class="w-2 h-1"><use href="#down"/></svg></div></div>
  <span data-w="41" class="ml-[8px]">Rotation</span>
  <div class="ml-[10px] w-[77px] h-[22px] border border-[#b3b3b3] rounded-[2px] bg-white flex items-center"><span data-w="16" class="ml-[4px]">0.0</span><div class="ml-auto w-4 h-full border-l border-[#b3b3b3] bg-[#f0f0f0] flex flex-col items-center justify-around"><svg class="w-2 h-1 rotate-180"><use href="#down"/></svg><div class="w-full h-px bg-[#b3b3b3]"></div><svg class="w-2 h-1"><use href="#down"/></svg></div></div>
  <svg class="w-3 h-3 ml-[7px]"><use href="#xm"/></svg>
  <span data-w="35" class="ml-[4px] -mt-0.5">Render</span>
  <svg class="w-4 h-4 ml-[19px]" viewBox="0 0 16 16"><circle cx="8" cy="8" r="6" fill="#ccc" stroke="#777" stroke-width="2"/><path d="M8 0v16M0 8h16" stroke="#777"/><circle cx="8" cy="8" r="3" fill="#eee" stroke="#888"/></svg>
  <span data-w="53" class="ml-[3px]">EPSG:3826</span>
  <svg class="w-4 h-4 ml-[23px]" viewBox="0 0 16 16"><ellipse cx="8" cy="7" rx="8" ry="6" fill="#666"/><path d="M9 11l5 4-1-6z" fill="#666"/><path d="M3.500 7h2M7 7h2M10.500 7h2" stroke="#fff" stroke-width="2"/></svg>
</footer>

<!-- Taskbar -->
<div class="h-10 bg-black flex items-center text-white text-[12px] font-['Noto_Sans','Open_Sans',sans-serif] [font-stretch:normal]">
  <svg class="w-4 h-4 ml-4" viewBox="0 0 16 16" fill="#fff"><path d="M0 2.300L6.700 1.300v6.200H0zM7.500 1.200L16 0v7.500H7.500zM0 8.300h6.700v6.300L0 13.600zM7.500 8.300H16V16l-8.500-1.200z"/></svg>
  <svg class="w-4 h-4 ml-8" viewBox="0 0 16 16" fill="none" stroke="#fff" stroke-width="1.400"><circle cx="10.500" cy="5.500" r="4.800"/><path d="M7 9L.5 15.500"/></svg>
  <svg class="w-5 h-4 ml-[30px]" viewBox="0 0 20 16" fill="none" stroke="#fff" stroke-width="1.200"><path d="M4.500 1.500h11v13h-11zM3 3.500H.7v9H3M17 3.500h2.300v9H17"/></svg>
  <div class="w-10 h-10 ml-5 border-b-2 border-[#9fd160] flex items-center justify-center"><svg class="w-[22px] h-5" viewBox="0 0 22 20"><path d="M0 2h8l1.500 2H22v14H0z" fill="#fbd668"/><path d="M0 2V1h7v1zM1 5h20v3H1z" fill="#fff0b5"/><path d="M4 18v-6c0-1 1-2 2-2h10c1 0 2 1 2 2v6h-3.500v-4h-7v4z" fill="#35b5ee"/></svg></div>
  <div class="w-12 h-10 ml-[5px] bg-[#333] border-b-2 border-[#9fd160] flex items-center justify-center relative"><svg class="w-5 h-6" viewBox="0 0 20 24"><ellipse cx="9" cy="13" rx="5.500" ry="7" fill="none" stroke="#e6ee66" stroke-width="3.500"/><path d="M10 16c1 4 4 6 6 4" fill="none" stroke="#d7e04d" stroke-width="2.500"/><path d="M7.500 15L15 5" stroke="#1f7a2b" stroke-width="2.500"/><path d="M18 1l-1.500 7-5-4z" fill="#1f7a2b"/></svg><div class="absolute right-0 top-0 w-[4px] h-10 bg-black/30"></div></div>
  <svg class="w-[112px] h-4 ml-auto" viewBox="1045 692 112 16" fill="none" stroke="#fff" stroke-width="1.200"><path d="M1046 703l6-6 6 6"/><path d="M1072 696h11v8h-11zM1083.500 698.500v3M1068.500 696v3h3v-3M1070 699v5h2M1069 694v2M1071 694v2"/><path d="M1073.500 697.500h8v5h-8z" fill="#fff"/><path d="M1096 694.500h11.500v9H1097M1092.500 694.500h4v4h-4zM1094.500 699v7M1102 703.500v3M1098 706.500h8"/><path d="M1116.500 697.500h2.500l4-3.500v12l-4-3.500h-2.500zM1125 697c1.500 1.500 1.500 4 0 6M1127.500 695c3 3 3 7 0 10M1130 693.500c3.500 4 3.500 9 0 13"/><path d="M1140 692.500h16v12h-5.500l-2.500 3-2.500-3H1140z" fill="#fff" stroke="none"/><path d="M1143 696.500h10M1143 699.500h10M1143 702h6" stroke="#000"/></svg>
  <span data-w="23" class="ml-[9px]">ENG</span>
  <div class="w-[58px] ml-[17px] pb-1 flex flex-col items-center leading-[17px]"><span data-w="27">20:23</span><span data-w="58">10/01/2018</span></div>
  <div class="w-px h-10 bg-[#555] ml-[11px] mr-1"></div>
</div>

<script>
// Runs once the stylesheet is in force, and again when fonts settle.
function fitLabels() {
  if (getComputedStyle(document.body).fontSize !== '11px') return;
  for (const el of document.querySelectorAll('[data-w]')) {
    el.style.letterSpacing = '0px';
    const r = document.createRange();
    r.selectNodeContents(el);
    const n = el.textContent.length;
    el.style.letterSpacing = ((+el.dataset.w - r.getBoundingClientRect().width) / n).toFixed(3) + 'px';
  }
}
fitLabels();
addEventListener('load', () => { fitLabels(); requestAnimationFrame(fitLabels); });
document.fonts.ready.then(fitLabels);
new MutationObserver(fitLabels).observe(document.head, { childList: true, subtree: true });
</script>
</body>
</html>
